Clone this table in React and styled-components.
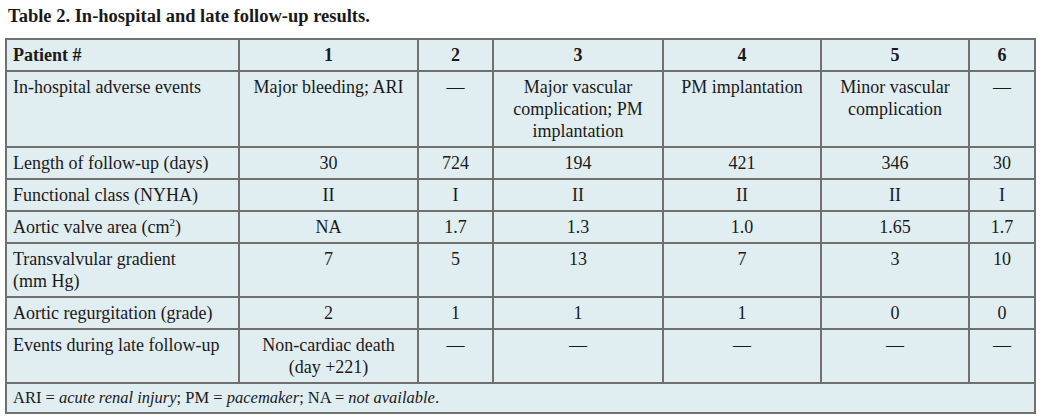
import styled, { createGlobalStyle } from "styled-components";

const COLUMNS = [233, 179, 75, 170, 158, 148, 66];

const ROWS = [
  {
    label: "In-hospital adverse events",
    values: [
      "Major bleeding; ARI",
      "—",
      "Major vascular complication; PM implantation",
      "PM implantation",
      "Minor vascular complication",
      "—",
    ],
  },
  { label: "Length of follow-up (days)", values: ["30", "724", "194", "421", "346", "30"] },
  { label: "Functional class (NYHA)", values: ["II", "I", "II", "II", "II", "I"] },
  {
    label: (
      <>
        Aortic valve area (cm<sup>2</sup>)
      </>
    ),
    values: ["NA", "1.7", "1.3", "1.0", "1.65", "1.7"],
  },
  {
    label: (
      <>
        Transvalvular gradient
        <br />
        (mm Hg)
      </>
    ),
    values: ["7", "5", "13", "7", "3", "10"],
  },
  { label: "Aortic regurgitation (grade)", values: ["2", "1", "1", "1", "0", "0"] },
  {
    label: "Events during late follow-up",
    values: ["Non-cardiac death (day +221)", "—", "—", "—", "—", "—"],
  },
];

const GlobalStyle = createGlobalStyle`
  body {
    margin: 0;
    background: #ffffff;
    font-family: "Liberation Serif", "Times New Roman", serif;
    color: #1a1a1a;
  }
`;

const Page = styled.div`
  padding: 6px 0 0 5px;
`;

const Caption = styled.h1`
  margin: 0 0 11px 3px;
  font-size: 18.5px;
  font-weight: bold;
  line-height: 21px;
`;

const Table = styled.table`
  width: ${COLUMNS.reduce((a, b) => a + b, 0)}px;
  table-layout: fixed;
  border-collapse: collapse;
  background: #e0edf1;
  border: 2px solid #707070;
  font-size: 18px;
  line-height: 22px;
`;

const Cell = styled.td`
  border: 2px solid #707070;
  padding: 4px 6px 4px 6px;
  vertical-align: top;
  text-align: ${(p) => (p.$label ? "left" : "center")};
  font-weight: ${(p) => (p.$head ? "bold" : "normal")};

  sup {
    font-size: 11px;
    line-height: 0;
    vertical-align: 7px;
  }
`;

const HeadCell = styled(Cell).attrs({ as: "th" })`
  padding-top: 4px;
  padding-bottom: 4px;
`;

const Note = styled.td`
  border: 2px solid #707070;
  padding: 3px 6px 3px 6px;
  font-size: 16.5px;
  line-height: 22px;

  em {
    font-style: italic;
  }
`;

const App = () => {
  return (
    <Page>
      <GlobalStyle />
      <Caption>Table 2. In-hospital and late follow-up results.</Caption>
      <Table>
        <colgroup>
          {COLUMNS.map((w, i) => (
            <col key={i} style={{ width: w }} />
          ))}
        </colgroup>
        <thead>
          <tr>
            <HeadCell $label $head>Patient #</HeadCell>
            {[1, 2, 3, 4, 5, 6].map((n) => (
              <HeadCell key={n} $head>{n}</HeadCell>
            ))}
          </tr>
        </thead>
        <tbody>
          {ROWS.map((row, i) => (
            <tr key={i}>
              <Cell $label>{row.label}</Cell>
              {row.values.map((v, j) => (
                <Cell key={j}>{v}</Cell>
              ))}
            </tr>
          ))}
          <tr>
            <Note colSpan={7}>
              ARI = <em>acute renal injury</em>; PM = <em>pacemaker</em>; NA = <em>not available</em>.
            </Note>
          </tr>
        </tbody>
      </Table>
    </Page>
  );
};

export default App;
